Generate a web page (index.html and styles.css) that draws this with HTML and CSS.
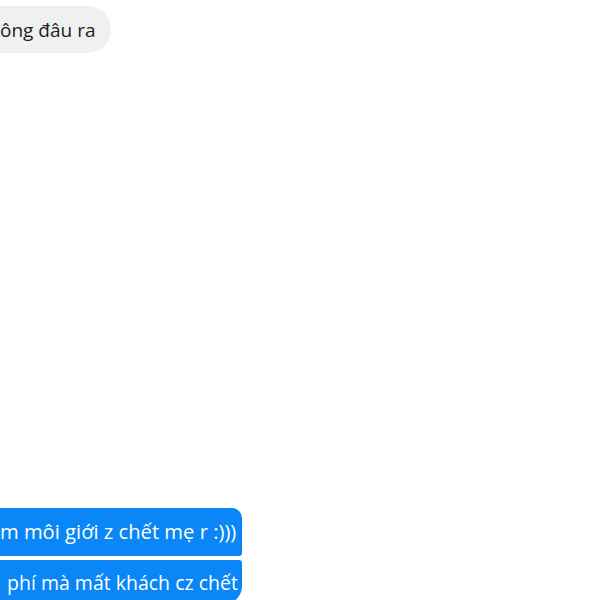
FILE: index.html
```html
<!DOCTYPE html>
<html>
<head>
<meta charset="utf-8">
<link rel="stylesheet" href="styles.css">
</head>
<body>
<div class="chat">
  <div class="row row-in">
    <div class="bubble in"><span>ông đâu ra</span></div>
  </div>
  <div class="group-out">
    <div class="row row-out">
      <div class="bubble out first"><span>m môi giới z chết mẹ r :)))</span></div>
    </div>
    <div class="row row-out">
      <div class="bubble out last"><span>phí mà mất khách cz chết</span></div>
    </div>
  </div>
</div>
</body>
</html>
```
FILE: styles.css
```css
html, body {
  margin: 0;
  padding: 0;
  background: #ffffff;
}
.chat {
  width: 600px;
  height: 600px;
  overflow: hidden;
  font-family: "Open Sans", "Noto Sans", sans-serif;
  font-size: 19px;
  display: flex;
  flex-direction: column;
}
.row {
  display: flex;
  justify-content: flex-end;
  white-space: nowrap;
}
.row-in {
  width: 111px;
  margin-top: 6px;
}
.row-out {
  width: 242px;
}
.group-out {
  margin-top: 455px;
  display: flex;
  flex-direction: column;
  gap: 4px;
}
.bubble {
  flex: none;
  box-sizing: border-box;
  display: flex;
  align-items: center;
}
.in {
  height: 47px;
  width: 111px;
  background: #f0f0f0;
  color: #1c1e21;
  border-radius: 0 23px 23px 0;
  padding: 0 0 0 0;
}
.out {
  height: 48px;
  width: 242px;
  background: #0a86f6;
  color: #ffffff;
  padding: 0;
}
.first {
  font-size: 20.2px;
  border-radius: 0 10px 3px 0;
  padding-bottom: 2px;
}
.last {
  font-size: 19.5px;
  border-radius: 0 3px 18px 0;
  padding-left: 7px;
  height: 44px;
  align-items: flex-start;
  padding-top: 9px;
}
```
